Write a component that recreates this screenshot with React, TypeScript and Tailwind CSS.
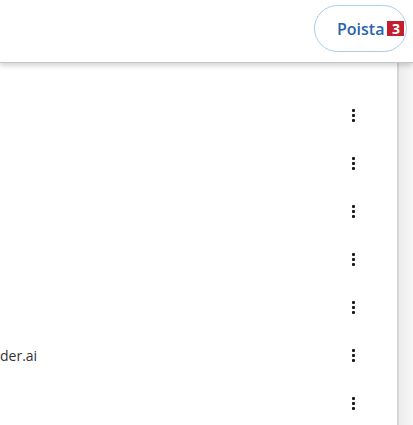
import React from 'react';

export default function App() {
  // rows of the list; only the 6th shows visible text on the left (cut off)
  const rows = ['', '', '', '', '', 'der.ai', ''];

  return (
    <div className="w-[413px] h-[425px] overflow-hidden bg-white font-['Open_Sans',sans-serif] text-[#333]">
      <header className="relative z-10 h-[63px] bg-white flex justify-end items-start pt-[5px] pr-[6px] border-b border-[#c3c6c6] shadow-[0_3px_5px_rgba(0,0,0,0.16)]">
        <button className="w-[93px] h-[47px] shrink-0 rounded-full border-[1.5px] border-[#a9cdef] bg-white flex items-center pl-[22px] gap-[3px]">
          <span className="text-[16px] font-semibold text-[#2a63ab] leading-none">Poista</span>
          <span className="w-[17px] h-[15px] shrink-0 bg-[#c41e2e] text-white text-[14px] font-bold leading-none flex items-center justify-center">
            3
          </span>
        </button>
      </header>

      <div className="flex h-[362px]">
        <main className="w-[397px] shrink-0 pt-[28px]">
          {rows.map((label, i) => (
            <div key={i} className="h-[48px] flex items-center justify-between pr-[42px]">
              <span className="text-[14px] text-[#333]">{label}</span>
              <span className="flex flex-col gap-[2px]">
                <span className="w-[3px] h-[3px] bg-[#1a1a1a] rounded-[1px]" />
                <span className="w-[3px] h-[3px] bg-[#1a1a1a] rounded-[1px]" />
                <span className="w-[3px] h-[3px] bg-[#1a1a1a] rounded-[1px]" />
              </span>
            </div>
          ))}
        </main>
        <aside className="flex-1 border-l-2 border-[#d6d6d6] bg-gradient-to-r from-[#ececec] to-[#f7f7f7]" />
      </div>
    </div>
  );
}
